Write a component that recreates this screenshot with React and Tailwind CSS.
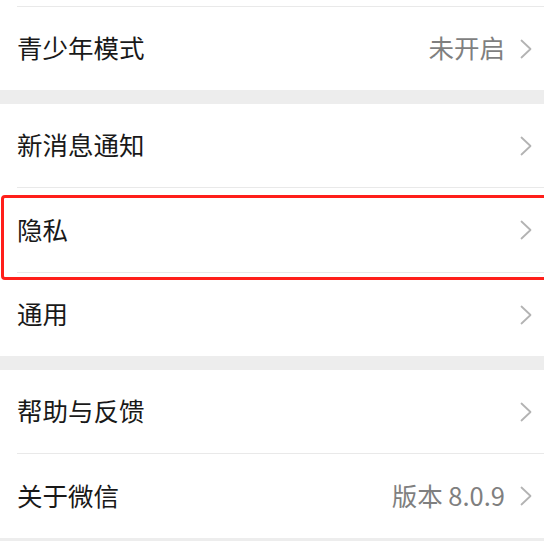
import React from 'react';

const Chevron = () => (
  <svg width="12" height="20" viewBox="0 0 12 20" fill="none" className="shrink-0">
    <polyline points="1.5,1.5 10.5,10 1.5,18.5" stroke="#b3b3b3" strokeWidth="1.8" strokeLinecap="round" strokeLinejoin="round" />
  </svg>
);

const Divider = () => (
  <div className="bg-white">
    <div className="ml-[17px] h-px bg-[#e9e9e9]"></div>
  </div>
);

const Gap = () => <div className="h-[14px] bg-[#ededed]"></div>;

const Row = ({ label, value, tall, children }) => (
  <div className={`relative flex items-center bg-white pl-[17px] pr-[12px] ${tall ? 'h-[84px]' : 'h-[83px]'}`}>
    <span className="mb-[3px] flex-1 text-[25.5px] leading-none text-[#191919]">{label}</span>
    {value && <span className="mb-[3px] mr-[15px] text-[25.5px] leading-none text-[#7f7f7f]">{value}</span>}
    <Chevron />
    {children}
  </div>
);

export default function App() {
  return (
    <div
      className="h-[541px] w-[544px] overflow-hidden bg-[#ededed]"
      style={{ fontFamily: '"Noto Sans CJK SC", "Noto Sans", sans-serif' }}
    >
      <div className="h-[6px] bg-white"></div>
      <Divider />
      <Row label="青少年模式" value="未开启" />
      <Gap />

      <Row label="新消息通知" />
      <Divider />
      <Row label="隐私" tall>
        {/* red highlight frame */}
        <div className="pointer-events-none absolute -right-[10px] left-[1px] top-[7px] z-10 h-[85px] rounded-[4px] border-[3px] border-[#ff1f1a]"></div>
      </Row>
      <Divider />
      <Row label="通用" />
      <Gap />

      <Row label="帮助与反馈" />
      <Divider />
      <Row label="关于微信" value="版本 8.0.9" tall />
      <Gap />
    </div>
  );
}
